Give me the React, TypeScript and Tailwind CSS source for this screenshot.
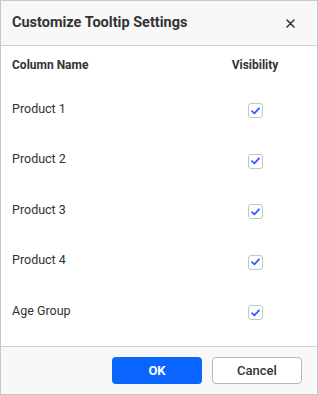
const rows = ['Product 1', 'Product 2', 'Product 3', 'Product 4', 'Age Group']

function CheckBox() {
  return (
    <span className="flex h-[15px] w-[15px] items-center justify-center rounded-[3px] border border-[#c4c4c4] bg-white">
      <svg width="9" height="8" viewBox="0 0 9 8" fill="none">
        <path d="M1 4.2 L3.4 6.4 L8 1.3" stroke="#2f5fff" strokeWidth="1.8" strokeLinecap="round" strokeLinejoin="round" />
      </svg>
    </span>
  )
}

export default function App() {
  return (
    <div className="flex h-[395px] w-[318px] flex-col border border-[#c8c8c8] bg-white font-['Roboto',sans-serif] text-[#333]">
      {/* Header */}
      <div className="flex h-[45px] shrink-0 items-center justify-between border-b border-[#cfcfcf] bg-[#f8f8f8] pl-[11px] pr-[22px]">
        <h1 className="text-[14.5px] font-bold text-[#333]">Customize Tooltip Settings</h1>
        <svg width="9" height="9" viewBox="0 0 9 9">
          <path d="M1 1 L8 8 M8 1 L1 8" stroke="#333" strokeWidth="1.5" strokeLinecap="round" />
        </svg>
      </div>

      {/* Body */}
      <div className="flex-1 pl-[11px] pr-[22px]">
        <div className="grid h-[38px] grid-cols-[1fr_80px] items-center text-[12px] font-bold">
          <span>Column Name</span>
          <span className="text-center">Visibility</span>
        </div>
        {rows.map((r) => (
          <div key={r} className="grid h-[50.5px] grid-cols-[1fr_80px] items-center text-[12.5px]">
            <span>{r}</span>
            <span className="flex justify-center pt-[3px]">
              <CheckBox />
            </span>
          </div>
        ))}
      </div>

      {/* Footer */}
      <div className="flex h-[48px] shrink-0 items-center justify-end gap-[10px] border-t border-[#cfcfcf] bg-[#f8f8f8] pr-[15px]">
        <button className="h-[27px] w-[90px] rounded-[4px] bg-[#0a66ff] text-[13px] font-bold text-white">OK</button>
        <button className="h-[27px] w-[90px] rounded-[4px] border border-[#b8b8b8] bg-white text-[13px] font-medium text-[#333]">Cancel</button>
      </div>
    </div>
  )
}
